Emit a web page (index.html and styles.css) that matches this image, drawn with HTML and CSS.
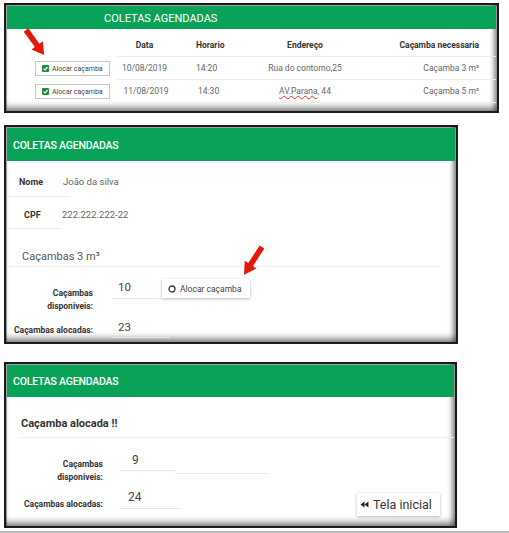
FILE: index.html
```html
<!DOCTYPE html>
<html lang="pt">
<head>
<meta charset="utf-8">
<title>Coletas agendadas</title>
<link rel="stylesheet" href="styles.css">
</head>
<body>
<div class="page">

  <section class="frame frame-1">
    <div class="card">
      <header class="bar bar-1">COLETAS AGENDADAS</header>
      <div class="table">
        <div class="cell c1"></div>
        <div class="cell th c2">Data</div>
        <div class="cell th c3">Horario</div>
        <div class="cell th c4">Endereço</div>
        <div class="cell th c5">Caçamba necessaria</div>

        <div class="cell c1"><span class="chk-btn"><svg class="chk" viewBox="0 0 8 8"><rect x="0" y="0" width="8" height="8" rx="1.2" fill="#1f8f3a"/><path d="M1.8 4.2 L3.4 5.7 L6.3 2.4" fill="none" stroke="#fff" stroke-width="1.3"/></svg>Alocar caçamba</span></div>
        <div class="cell td c2">10/08/2019</div>
        <div class="cell td c3">14:20</div>
        <div class="cell td c4">Rua do contorno,25</div>
        <div class="cell td c5">Caçamba 3 m³</div>

        <div class="cell c1"><span class="chk-btn"><svg class="chk" viewBox="0 0 8 8"><rect x="0" y="0" width="8" height="8" rx="1.2" fill="#1f8f3a"/><path d="M1.8 4.2 L3.4 5.7 L6.3 2.4" fill="none" stroke="#fff" stroke-width="1.3"/></svg>Alocar caçamba</span></div>
        <div class="cell td c2 shift">11/08/2019</div>
        <div class="cell td c3 shift">14:30</div>
        <div class="cell td c4"><span><span class="spell">AV.Parana</span>, 44</span></div>
        <div class="cell td c5">Caçamba 5 m³</div>
      </div>
    </div>
    <svg class="arrow-layer" width="495" height="110" viewBox="0 0 495 110">
      <polygon transform="translate(22,27) rotate(-36)" points="-2.8,0 2.8,0 2.8,19 7,19 0,31 -7,19 -2.8,19" fill="#e3170a"/>
    </svg>
  </section>

  <section class="frame frame-2">
    <div class="card">
      <header class="bar bar-2">COLETAS AGENDADAS</header>
      <div class="info-row info-nome"><span class="info-label">Nome</span><span class="info-value">João da silva</span></div>
      <div class="info-row info-cpf"><span class="info-label">CPF</span><span class="info-value">222.222.222-22</span></div>
      <div class="size-title">Caçambas 3 m³</div>
      <div class="field-row fr2-disp">
        <div class="f-label">Caçambas<br>disponiveis:</div>
        <div class="f-value">10</div>
        <button class="btn btn-alocar"><svg class="ring" viewBox="0 0 8 8"><circle cx="4" cy="4" r="3" fill="none" stroke="#333" stroke-width="1.3"/></svg>Alocar caçamba</button>
      </div>
      <div class="field-row fr2-aloc">
        <div class="f-label">Caçambas alocadas:</div>
        <div class="f-value">23</div>
      </div>
    </div>
    <svg class="arrow-layer" width="454" height="219" viewBox="0 0 454 219">
      <polygon transform="translate(258,122) rotate(33)" points="-2.8,0 2.8,0 2.8,21 7,21 0,33 -7,21 -2.8,21" fill="#e3170a"/>
    </svg>
  </section>

  <section class="frame frame-3">
    <div class="card">
      <header class="bar bar-3">COLETAS AGENDADAS</header>
      <div class="alert-title">Caçamba alocada !!</div>
      <div class="field-row fr3-disp">
        <div class="f-label">Caçambas<br>disponiveis:</div>
        <div class="f-value">9</div>
        <div class="f-extra"></div>
      </div>
      <div class="field-row fr3-aloc">
        <div class="f-label">Caçambas alocadas:</div>
        <div class="f-value">24</div>
        <button class="btn btn-home"><svg class="rew" viewBox="0 0 10 8"><polygon points="5,0.5 5,7.5 0.5,4" fill="#222"/><polygon points="9.5,0.5 9.5,7.5 5,4" fill="#222"/></svg>Tela inicial</button>
      </div>
    </div>
  </section>

</div>
</body>
</html>
```
FILE: styles.css
```css
* { box-sizing: border-box; }
html, body { margin: 0; padding: 0; background: #fff; }
body {
  width: 509px;
  height: 533px;
  overflow: hidden;
  font-family: Roboto, "Liberation Sans", sans-serif;
  color: #333;
}
.page {
  width: 509px;
  height: 533px;
  padding: 3px 0 0 4px;
  display: flex;
  flex-direction: column;
  align-items: flex-start;
  border-bottom: 2px solid #bdbdbd;
}

/* framed screenshots */
.frame {
  position: relative;
  border: 2px solid #1b1b1b;
  background: #fff;
  padding: 1px 1px 0 1px;
  box-shadow:
    inset 0 -7px 6px -3px rgba(0,0,0,.45),
    inset -5px 0 5px -2px rgba(0,0,0,.45),
    inset 1px 1px 1px rgba(0,0,0,.35);
}
.frame-1 { width: 495px; height: 110px; }
.frame-2 { width: 454px; height: 219px; margin-top: 12px; }
.frame-3 { width: 453px; height: 166px; margin-top: 18px; }
.card { width: 100%; }

.arrow-layer {
  position: absolute;
  left: -2px;
  top: -2px;
  overflow: visible;
  pointer-events: none;
}

.bar {
  background: #08a359;
  color: #fff;
  display: flex;
  align-items: center;
  white-space: nowrap;
}
.bar-1 { height: 23px; padding: 2px 0 0 97px; font-size: 11px; }
.bar-2 { height: 33px; padding: 2px 0 0 6px; font-size: 10.5px; font-weight: 500; letter-spacing: -0.2px; }
.bar-3 { height: 32px; padding: 1px 0 0 6px; font-size: 10.5px; font-weight: 500; letter-spacing: -0.2px; }

/* table of panel 1 */
.table {
  margin-top: 5px;
  display: grid;
  grid-template-columns: 110px 55px 68px 130px 1fr;
  grid-template-rows: 23px 23px 23px;
}
.cell {
  display: flex;
  align-items: center;
  white-space: nowrap;
  font-size: 8.5px;
  border-bottom: 1px solid #ececec;
}
.cell.c1 { border-bottom: none; padding-left: 28px; }
.th { font-weight: 700; color: #333; }
.td { color: #666; }
.c2 { justify-content: center; }
.c3 { padding-left: 24px; }
.c4 { justify-content: center; }
.c5 { justify-content: flex-end; padding-right: 17px; }
.c2.shift { padding-left: 3px; }
.c3.shift { padding-left: 26px; }
.spell { text-decoration: underline wavy #e0302a; text-decoration-thickness: 1px; text-underline-offset: 1px; }

.chk-btn {
  display: inline-flex;
  align-items: center;
  width: 75px;
  height: 15px;
  border: 1px solid #c9c9c9;
  padding-left: 6px;
  font-size: 7px;
  color: #444;
  background: #fff;
}
.chk { width: 7px; height: 7px; margin-right: 3px; flex: none; }

/* panel 2 */
.info-row {
  display: flex;
  align-items: center;
  line-height: 14px;
  background-image: linear-gradient(#ebebeb, #ebebeb);
  background-repeat: no-repeat;
}
.info-label { font-size: 9px; font-weight: 700; color: #333; }
.info-value { font-size: 9.5px; color: #666; }
.info-nome { padding: 14px 0 8px; background-position: 1px 100%; background-size: 62px 1px; }
.info-nome .info-label { width: 56px; padding-left: 12px; }
.info-cpf { padding: 11px 0 7px; background-position: 1px 100%; background-size: 52px 1px; }
.info-cpf .info-label { width: 55px; padding-left: 17px; }

.size-title {
  margin: 0 15px 0 1px;
  padding: 21px 0 2px 14px;
  line-height: 14px;
  font-size: 11px;
  color: #555;
  border-bottom: 1px solid #eeeeee;
}

.field-row { display: flex; align-items: flex-start; }
.f-label {
  text-align: right;
  font-size: 8.5px;
  font-weight: 700;
  line-height: 13px;
  color: #333;
  white-space: nowrap;
}
.f-value {
  font-size: 11.5px;
  line-height: 16px;
  color: #444;
  border-bottom: 1px solid #e6e6e6;
}

.fr2-disp { padding-top: 12px; }
.fr2-disp .f-label { width: 86px; padding-top: 8px; }
.fr2-disp .f-value { margin-left: 19px; width: 50px; padding: 0 0 3px 6px; }
.fr2-aloc { padding-top: 6px; }
.fr2-aloc .f-label { width: 86px; padding-top: 5px; }
.fr2-aloc .f-value { margin-left: 19px; width: 58px; padding: 0 0 2px 6px; }

.btn {
  display: inline-flex;
  align-items: center;
  border: none;
  background: #fff;
  font-family: inherit;
  white-space: nowrap;
  cursor: pointer;
}
.btn-alocar {
  width: 88px;
  height: 19px;
  padding: 0 0 0 6px;
  font-size: 8.5px;
  color: #444;
  box-shadow: 0 1px 3px rgba(0,0,0,.28);
}
.ring { width: 8px; height: 8px; margin-right: 4px; flex: none; }

/* panel 3 */
.alert-title {
  margin-left: 13px;
  padding: 20px 0 6px 1px;
  line-height: 14px;
  font-size: 11px;
  font-weight: 700;
  color: #333;
  border-bottom: 1px solid #eeeeee;
}
.fr3-disp { padding-top: 14px; }
.fr3-disp .f-label { width: 96px; padding-top: 6px; }
.fr3-disp .f-value { margin-left: 17px; width: 55px; padding: 0 0 2px 12px; font-size: 12px; }
.f-extra { width: 93px; height: 22px; border-bottom: 1px solid #ececec; }
.fr3-aloc { padding-top: 5px; }
.fr3-aloc .f-label { width: 96px; padding-top: 9px; }
.fr3-aloc .f-value { margin-left: 17px; width: 60px; padding: 0 0 3px 8px; font-size: 12px; }
.btn-home {
  margin: 4px 14px 0 auto;
  width: 83px;
  height: 23px;
  padding: 0 0 0 3px;
  font-size: 12.5px;
  color: #333;
  box-shadow: 0 1px 3px rgba(0,0,0,.28);
}
.rew { width: 9px; height: 7px; margin-right: 4px; flex: none; }
```
